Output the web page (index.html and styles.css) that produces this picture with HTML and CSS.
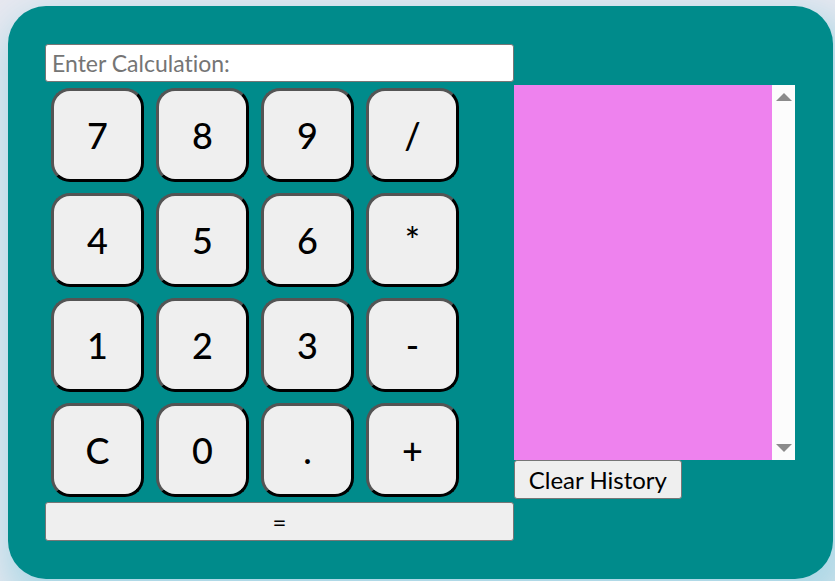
FILE: index.html
```html
<!DOCTYPE html>
<html lang="en">
<head>
<meta charset="utf-8">
<title>Calculator</title>
<link rel="stylesheet" href="styles.css">
</head>
<body>
<main class="calculator">
  <section class="pad">
    <input class="display" type="text" aria-label="Calculation" placeholder="Enter Calculation:">
    <div class="keys">
      <button class="key" type="button">7</button>
      <button class="key" type="button">8</button>
      <button class="key" type="button">9</button>
      <button class="key" type="button">/</button>
      <button class="key" type="button">4</button>
      <button class="key" type="button">5</button>
      <button class="key" type="button">6</button>
      <button class="key" type="button">*</button>
      <button class="key" type="button">1</button>
      <button class="key" type="button">2</button>
      <button class="key" type="button">3</button>
      <button class="key" type="button">-</button>
      <button class="key" type="button">C</button>
      <button class="key" type="button">0</button>
      <button class="key" type="button">.</button>
      <button class="key" type="button">+</button>
    </div>
    <button class="action" type="button">=</button>
  </section>
  <section class="side">
    <div class="history">
      <div class="entries"></div>
      <div class="track">
        <svg class="arrow" viewBox="0 0 16 8" aria-hidden="true"><path d="M0 8 8 0l8 8z"/></svg>
        <svg class="arrow" viewBox="0 0 16 8" aria-hidden="true"><path d="M0 0h16L8 8z"/></svg>
      </div>
    </div>
    <button class="action" type="button">Clear History</button>
  </section>
</main>
</body>
</html>
```

FILE: styles.css
```css
* {
  box-sizing: border-box;
}

html {
  background: #e8e8f0;
}

body {
  margin: 0;
  padding: 6px 2px 2px 8px;
  font-family: "Gill Sans", "Gill Sans MT", Lato, sans-serif;
}

.calculator {
  display: grid;
  grid-template-columns: 5fr 3fr;
  padding: 38px 38px 38px 37px;
  border-radius: 38px;
  background: darkcyan;
  box-shadow: 8px 19px 38px 12px lightblue;
}

.pad {
  display: flex;
  flex-direction: column;
}

.display,
.action {
  border: 1px solid #767676;
  border-radius: 3px;
  font-family: inherit;
  font-size: 24px;
  line-height: 28px;
  color: black;
}

.display {
  width: 100%;
  height: 38px;
  padding: 0 6px;
  background: white;
  font-size: 23px;
  font-variant-ligatures: none;
}

.display::placeholder {
  color: #757575;
}

.keys {
  display: grid;
  grid-template-columns: repeat(4, 93px);
  gap: 11px 12px;
  padding: 6px 6px 5px;
}

.key {
  height: 94px;
  padding: 0;
  border: 3px outset black;
  border-radius: 19px;
  background: #efefef;
  font-family: inherit;
  font-size: 36px;
  font-weight: 500;
  color: black;
}

.action {
  height: 39px;
  padding: 0 14px;
  background: #efefef;
}

.side {
  display: flex;
  flex-direction: column;
  align-items: flex-start;
  padding-top: 41px;
}

.history {
  display: flex;
  width: 100%;
  height: 375px;
  background: violet;
}

.entries {
  flex: 1;
}

.track {
  display: flex;
  flex-direction: column;
  align-items: center;
  justify-content: space-between;
  width: 23px;
  padding: 8px 0;
  background: #fcfcfc;
}

.arrow {
  width: 16px;
  height: 8px;
  fill: #8b8b8b;
}
```
